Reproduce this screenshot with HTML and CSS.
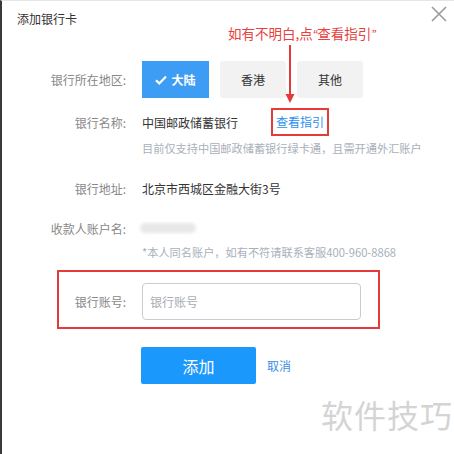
FILE: index.html
```html
<!DOCTYPE html>
<html lang="zh">
<head>
<meta charset="utf-8">
<link rel="stylesheet" href="styles.css">
</head>
<body>
<div class="dialog">
  <div class="titlebar">
    <span class="title">添加银行卡</span>
    <svg class="close" width="16" height="16" viewBox="0 0 16 16"><path d="M1 1L15 15M15 1L1 15" stroke="#9a9a9a" stroke-width="1.6" fill="none"/></svg>
  </div>

  <div class="form">
    <div class="row row-region">
      <span class="label">银行所在地区:</span>
      <div class="choices">
        <span class="choice active"><svg width="12" height="10" viewBox="0 0 12 10"><path d="M1 5.2L4.3 8.4L11 1.5" stroke="#fff" stroke-width="2.2" fill="none"/></svg>大陆</span>
        <span class="choice">香港</span>
        <span class="choice">其他</span>
      </div>
    </div>

    <div class="row row-bank">
      <span class="label">银行名称:</span>
      <span class="value">中国邮政储蓄银行</span>
      <a class="guide">查看指引</a>
    </div>
    <div class="hint hint1">目前仅支持中国邮政储蓄银行绿卡通，且需开通外汇账户</div>

    <div class="row row-addr">
      <span class="label">银行地址:</span>
      <span class="value">北京市西城区金融大街3号</span>
    </div>

    <div class="row row-name">
      <span class="label">收款人账户名:</span>
      <span class="blurname"></span>
    </div>
    <div class="hint hint2">*本人同名账户，如有不符请联系客服400-960-8868</div>

    <div class="highlight">
      <div class="row row-acct">
        <span class="label">银行账号:</span>
        <input class="input" type="text" placeholder="银行账号">
      </div>
    </div>

    <div class="actions">
      <button class="btn-add">添加</button>
      <a class="cancel">取消</a>
    </div>
  </div>

  <div class="note">如有不明白,点<span class="q">“</span>查看指引<span class="q">”</span></div>
  <svg class="arrow" width="12" height="60" viewBox="0 0 12 60"><path d="M6 0V52" stroke="#e53a3a" stroke-width="2"/><path d="M1.5 49L6 58L10.5 49Z" fill="#e53a3a"/></svg>
  <div class="watermark">软件技巧</div>
</div>
</body>
</html>
```

FILE: styles.css
```css
html, body {
  margin: 0;
  padding: 0;
  background: #fff;
}
body {
  width: 454px;
  height: 454px;
  overflow: hidden;
  font-family: "Noto Sans CJK SC", "Microsoft YaHei", sans-serif;
  font-size: 12px;
  color: #333;
}
.dialog {
  position: relative;
  height: 454px;
  border-left: 2px solid #3a3a3a;
  border-top: 1px solid #e6e6e6;
  box-sizing: border-box;
}
.titlebar {
  display: flex;
  justify-content: space-between;
  align-items: flex-start;
  padding: 5px 7px 0 15px;
  height: 24px;
}
.title {
  font-size: 12px;
  line-height: 14px;
  margin-top: 6px;
  color: #333;
}
.form {
  margin-top: 31px;
}
.row {
  display: flex;
  align-items: center;
}
.label {
  width: 124px;
  text-align: right;
  color: #888;
  flex: none;
  margin-right: 16px;
}
.row-region {
  height: 37px;
}
.choices {
  display: flex;
  gap: 11px;
}
.choice {
  display: flex;
  align-items: center;
  justify-content: center;
  gap: 4px;
  width: 66px;
  height: 37px;
  border-radius: 3px;
  background: #f2f2f2;
  color: #333;
  font-size: 12px;
}
.choice.active {
  width: 67px;
  border-radius: 0;
  background: #3d9cf3;
  color: #fff;
  font-weight: bold;
}
.row-bank {
  margin-top: 10px;
  height: 28px;
}
.value {
  color: #333;
}
.guide {
  margin-left: 33px;
  border: 2px solid #e53a3a;
  height: 24px;
  line-height: 24px;
  padding: 0 3px;
  color: #2d8ff0;
  font-size: 12px;
}
.hint {
  margin-left: 140px;
  color: #a9b0ba;
  line-height: 16px;
}
.hint1 {
  margin-top: 4px;
  font-size: 11.2px;
  white-space: nowrap;
}
.row-addr {
  margin-top: 22px;
  height: 20px;
}
.row-name {
  margin-top: 20px;
  height: 20px;
}
.blurname {
  display: block;
  width: 56px;
  height: 10px;
  margin-left: -2px;
  border-radius: 5px;
  background: #e8e8ea;
  filter: blur(1.5px);
}
.hint2 {
  margin-top: 6px;
  font-size: 11.2px;
  white-space: nowrap;
}
.highlight {
  margin-top: 10px;
  margin-left: 55px;
  width: 323px;
  height: 59px;
  box-sizing: border-box;
  border: 2px solid #e53a3a;
  padding-top: 11px;
}
.row-acct .label {
  width: 67px;
}
.input {
  width: 219px;
  height: 37px;
  box-sizing: border-box;
  border: 1px solid #c9ccd2;
  border-radius: 4px;
  padding: 0 7px;
  font-family: inherit;
  font-size: 12px;
  outline: none;
}
.input::placeholder {
  color: #a9adb3;
}
.actions {
  display: flex;
  align-items: center;
  margin-top: 18px;
  margin-left: 139px;
  gap: 11px;
}
.btn-add {
  width: 115px;
  height: 37px;
  border: none;
  border-radius: 2px;
  background: #1a98fb;
  color: #fff;
  font-family: inherit;
  font-size: 16px;
  padding: 0;
}
.cancel {
  color: #3a8ee6;
  font-size: 12px;
}
.note {
  position: absolute;
  left: 226px;
  top: 23px;
  color: #e8403c;
  font-size: 13.5px;
  line-height: 18px;
  white-space: nowrap;
}
.note .q {
  font-family: "Liberation Sans", sans-serif;
  font-style: italic;
}
.arrow {
  position: absolute;
  left: 282px;
  top: 44px;
}
.watermark {
  position: absolute;
  left: 319px;
  top: 391px;
  font-size: 32px;
  line-height: 44px;
  color: #d4d4d4;
  letter-spacing: 1px;
}
```
